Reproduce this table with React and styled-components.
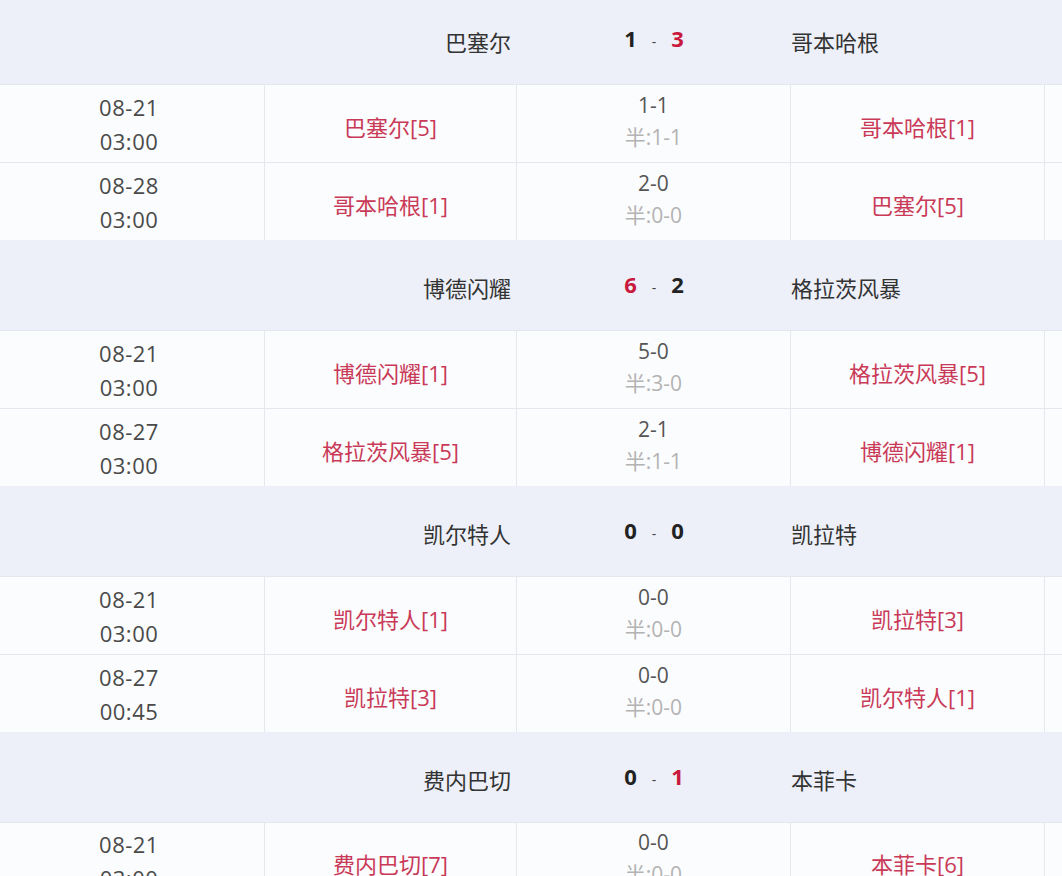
import React from "react";
import styled, { createGlobalStyle } from "styled-components";

const Global = createGlobalStyle`
  html, body { margin: 0; padding: 0; background: #ffffff; }
  body { font-family: "Open Sans", "Noto Sans CJK SC", sans-serif; }
`;

const Page = styled.div`
  margin-top: -6px;
  width: 1062px;
  overflow: hidden;
`;

const COLS = "265px 252px 274px 254px 1fr";

const GroupHeader = styled.div`
  display: grid;
  grid-template-columns: ${COLS};
  height: 90px;
  background: #edf0f8;
  align-items: center;
  font-size: 22px;
  color: #333;
`;

const HeadHome = styled.div`
  grid-column: 1 / 3;
  text-align: right;
  padding-right: 6px;
  padding-top: 4px;
`;

const HeadScore = styled.div`
  grid-column: 3;
  display: flex;
  justify-content: center;
  align-items: baseline;
  font-weight: 700;
  font-size: 22px;
  padding-bottom: 2px;
`;

const Goal = styled.span`
  color: ${(p) => (p.$win ? "#c8183c" : "#222")};
`;

const Dash = styled.span`
  font-size: 14px;
  font-weight: 400;
  color: #444;
  margin: 0 15px;
`;

const HeadAway = styled.div`
  grid-column: 4;
  text-align: left;
  padding-left: 0;
  padding-top: 4px;
`;

const Row = styled.div`
  display: grid;
  grid-template-columns: ${COLS};
  height: 78px;
  background: #fbfcfd;
  border-top: 1px solid #e4e7ee;
  box-sizing: border-box;
  &:last-child {
    border-bottom: 1px solid #e4e7ee;
  }
`;

const Cell = styled.div`
  display: flex;
  flex-direction: column;
  align-items: center;
  justify-content: center;
  border-right: 1px solid #e6e8ee;
  box-sizing: border-box;
  &:last-child {
    border-right: none;
  }
`;

const DateCell = styled(Cell)`
  padding-right: 6px;
`;

const DateLine = styled.div`
  font-size: 22px;
  line-height: 34px;
  color: #4a4a4a;
  letter-spacing: 0.5px;
`;

const TeamName = styled.div`
  font-size: 22px;
  color: #c93a58;
  padding-top: 4px;
`;

const FullScore = styled.div`
  font-size: 21px;
  line-height: 32px;
  color: #555;
`;

const HalfScore = styled.div`
  font-size: 21px;
  line-height: 32px;
  color: #b3b3b3;
`;

const ScoreCell = styled(Cell)`
  padding-bottom: 6px;
`;

const groups = [
  {
    home: "巴塞尔",
    away: "哥本哈根",
    hs: 1,
    as: 3,
    matches: [
      { d: "08-21", t: "03:00", h: "巴塞尔[5]", s: "1-1", hf: "半:1-1", a: "哥本哈根[1]" },
      { d: "08-28", t: "03:00", h: "哥本哈根[1]", s: "2-0", hf: "半:0-0", a: "巴塞尔[5]" },
    ],
  },
  {
    home: "博德闪耀",
    away: "格拉茨风暴",
    hs: 6,
    as: 2,
    matches: [
      { d: "08-21", t: "03:00", h: "博德闪耀[1]", s: "5-0", hf: "半:3-0", a: "格拉茨风暴[5]" },
      { d: "08-27", t: "03:00", h: "格拉茨风暴[5]", s: "2-1", hf: "半:1-1", a: "博德闪耀[1]" },
    ],
  },
  {
    home: "凯尔特人",
    away: "凯拉特",
    hs: 0,
    as: 0,
    matches: [
      { d: "08-21", t: "03:00", h: "凯尔特人[1]", s: "0-0", hf: "半:0-0", a: "凯拉特[3]" },
      { d: "08-27", t: "00:45", h: "凯拉特[3]", s: "0-0", hf: "半:0-0", a: "凯尔特人[1]" },
    ],
  },
  {
    home: "费内巴切",
    away: "本菲卡",
    hs: 0,
    as: 1,
    matches: [
      { d: "08-21", t: "03:00", h: "费内巴切[7]", s: "0-0", hf: "半:0-0", a: "本菲卡[6]" },
    ],
  },
];

export default function App() {
  return (
    <Page>
      <Global />
      {groups.map((g, i) => (
        <React.Fragment key={i}>
          <GroupHeader>
            <HeadHome>{g.home}</HeadHome>
            <HeadScore>
              <Goal $win={g.hs > g.as}>{g.hs}</Goal>
              <Dash>-</Dash>
              <Goal $win={g.as > g.hs}>{g.as}</Goal>
            </HeadScore>
            <HeadAway>{g.away}</HeadAway>
          </GroupHeader>
          {g.matches.map((m, j) => (
            <Row key={j}>
              <DateCell>
                <DateLine>{m.d}</DateLine>
                <DateLine>{m.t}</DateLine>
              </DateCell>
              <Cell>
                <TeamName>{m.h}</TeamName>
              </Cell>
              <ScoreCell>
                <FullScore>{m.s}</FullScore>
                <HalfScore>{m.hf}</HalfScore>
              </ScoreCell>
              <Cell>
                <TeamName>{m.a}</TeamName>
              </Cell>
              <Cell />
            </Row>
          ))}
        </React.Fragment>
      ))}
    </Page>
  );
}
